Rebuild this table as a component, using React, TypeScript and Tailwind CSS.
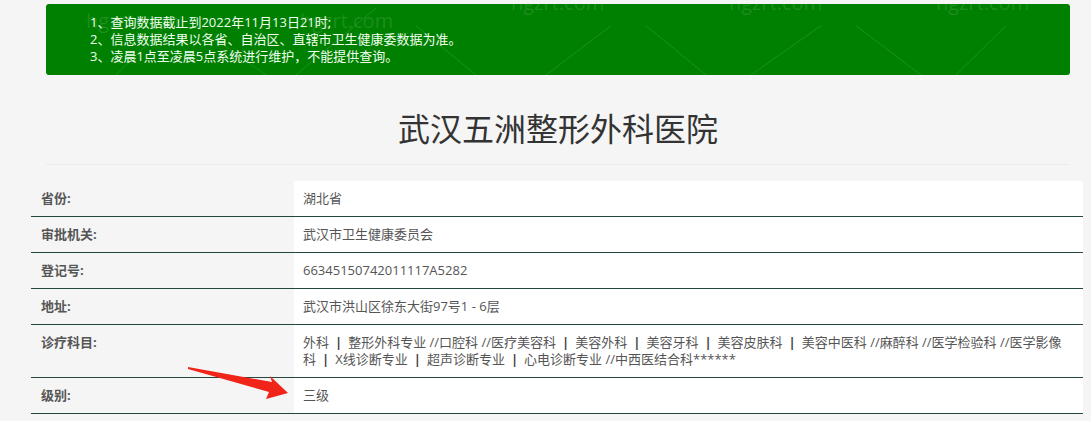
import React from "react";

const notices = [
    "1、查询数据截止到2022年11月13日21时;",
    "2、信息数据结果以各省、自治区、直辖市卫生健康委数据为准。",
    "3、凌晨1点至凌晨5点系统进行维护，不能提供查询。",
];

const Bar = () => <span className="px-[6px] font-bold text-[#444]">|</span>;

const rows: { label: string; value: React.ReactNode }[] = [
    { label: "省份:", value: "湖北省" },
    { label: "审批机关:", value: "武汉市卫生健康委员会" },
    { label: "登记号:", value: "66345150742011117A5282" },
    { label: "地址:", value: "武汉市洪山区徐东大街97号1 - 6层" },
    {
        label: "诊疗科目:",
        value: (
            <>
                外科<Bar />整形外科专业 //口腔科 //医疗美容科<Bar />美容外科<Bar />美容牙科<Bar />美容皮肤科<Bar />美容中医科 //麻醉科 //医学检验科 //医学影像
                <br />
                科<Bar />X线诊断专业<Bar />超声诊断专业<Bar />心电诊断专业 //中西医结合科******
            </>
        ),
    },
    { label: "级别:", value: "三级" },
];

const Watermark = () => (
    <svg className="pointer-events-none absolute inset-0 h-full w-full" viewBox="0 0 1024 72" preserveAspectRatio="none">
        <g stroke="#ffffff" strokeOpacity="0.12" strokeWidth="1">
            <line x1="70" y1="72" x2="120" y2="22" />
            <line x1="150" y1="22" x2="220" y2="72" />
            <line x1="250" y1="72" x2="330" y2="4" />
            <line x1="370" y1="22" x2="430" y2="72" />
            <line x1="500" y1="72" x2="565" y2="22" />
            <line x1="600" y1="22" x2="660" y2="72" />
            <line x1="705" y1="72" x2="775" y2="22" />
            <line x1="810" y1="22" x2="875" y2="72" />
            <line x1="910" y1="72" x2="960" y2="22" />
        </g>
        <g fill="#ffffff" fillOpacity="0.12" fontFamily="'Open Sans', sans-serif" fontSize="20">
            <text x="40" y="24">hgzrt.com</text>
            <text x="254" y="24">hgzrt.com</text>
            <text x="465" y="6">hgzrt.com</text>
            <text x="683" y="6">hgzrt.com</text>
            <text x="890" y="6">hgzrt.com</text>
        </g>
    </svg>
);

const App = () => {
    return (
        <div
            className="relative min-h-screen w-full overflow-hidden bg-[#f5f5f5] pt-[4px] text-[#555]"
            style={{ fontFamily: "'Open Sans', 'Noto Sans CJK SC', sans-serif" }}
        >
            {/* ===== NOTICE ===== */}
            <div className="relative ml-[46px] w-[1024px] overflow-hidden rounded-[3px] bg-[#008000] py-[10px] pl-[44px] text-[13px] leading-[17px] text-[#f0fff0]">
                <Watermark />
                {notices.map((n) => (
                    <div key={n} className="relative">{n}</div>
                ))}
            </div>

            {/* ===== TITLE ===== */}
            <div className="ml-[46px] w-[1024px] border-b border-[#ebebeb] pb-[15px] pt-[34px]">
                <h1 className="text-center text-[32px] font-normal leading-[40px] text-[#333]">武汉五洲整形外科医院</h1>
            </div>

            {/* ===== INFO TABLE ===== */}
            <div className="ml-[31px] mt-[16px] w-[1052px]">
                {rows.map((r) => (
                    <div key={r.label} className="flex border-b border-[#23483b]">
                        <div className="w-[263px] shrink-0 bg-[#f5f5f5] px-[10px] py-[9px] text-[13px] font-bold leading-[17px] text-[#555]">
                            {r.label}
                        </div>
                        <div className="flex-1 bg-white px-[9px] py-[9px] text-[13px] leading-[17px] text-[#555]">
                            {r.value}
                        </div>
                    </div>
                ))}
            </div>

            {/* Annotation arrow */}
            <svg className="pointer-events-none absolute left-[186px] top-[362px]" width="110" height="40" viewBox="0 0 110 40">
                <polygon points="2,5 86,20 84,14 102,31 80,37 83,30 2,7" fill="#f02418" />
            </svg>
        </div>
    );
};

export default App;
